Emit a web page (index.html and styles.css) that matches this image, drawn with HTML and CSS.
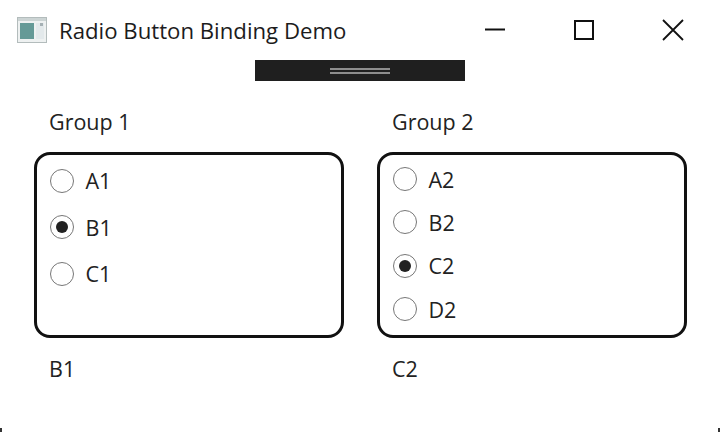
FILE: index.html
```html
<!DOCTYPE html>
<html lang="en">
<head>
<meta charset="utf-8">
<title>Radio Button Binding Demo</title>
<link rel="stylesheet" href="styles.css">
</head>
<body>
<div class="window">
  <header class="titlebar">
    <svg class="app-icon" width="30" height="26" viewBox="0 0 30 26" aria-hidden="true">
      <rect x="0.5" y="0.5" width="29" height="25" fill="#eef1f1" stroke="#b3bcbc"/>
      <rect x="1" y="1" width="28" height="3" fill="#ccd4d4"/>
      <rect x="3" y="6" width="14" height="16" fill="#659a97"/>
      <rect x="19" y="6" width="8" height="16" fill="#e3e9eb"/>
      <rect x="23" y="6" width="3" height="3" fill="#a5b0b4"/>
    </svg>
    <span class="title">Radio Button Binding Demo</span>
    <div class="controls">
      <svg class="ctl" width="22" height="22" viewBox="0 0 22 22" aria-hidden="true"><path d="M1 10.5H21" stroke="#111" stroke-width="2" fill="none"/></svg>
      <svg class="ctl" width="22" height="22" viewBox="0 0 22 22" aria-hidden="true"><rect x="2" y="2" width="18" height="18" stroke="#111" stroke-width="2" fill="none"/></svg>
      <svg class="ctl" width="22" height="22" viewBox="0 0 22 22" aria-hidden="true"><path d="M1 1L21 21M21 1L1 21" stroke="#111" stroke-width="1.8" fill="none"/></svg>
    </div>
  </header>
  <div class="debugbar"><div class="grip"></div></div>
  <main class="groups">
    <section class="group">
      <div class="label">Group 1</div>
      <div class="panel panel-wide">
        <div class="radio"><span class="dot"></span>A1</div>
        <div class="radio"><span class="dot on"></span>B1</div>
        <div class="radio"><span class="dot"></span>C1</div>
      </div>
      <div class="label value">B1</div>
    </section>
    <section class="group">
      <div class="label">Group 2</div>
      <div class="panel">
        <div class="radio"><span class="dot"></span>A2</div>
        <div class="radio"><span class="dot"></span>B2</div>
        <div class="radio"><span class="dot on"></span>C2</div>
        <div class="radio"><span class="dot"></span>D2</div>
      </div>
      <div class="label value">C2</div>
    </section>
  </main>
  <span class="tick tick-left"></span>
  <span class="tick tick-right"></span>
</div>
</body>
</html>
```
FILE: styles.css
```css
* { box-sizing: border-box; }
html, body { margin: 0; padding: 0; background: #fff; }
body { width: 720px; height: 432px; overflow: hidden; font-family: "Open Sans", "Noto Sans", sans-serif; color: #222; }
.window { position: relative; width: 720px; height: 432px; }
.titlebar { display: flex; align-items: center; height: 60px; padding-left: 17px; }
.app-icon { flex: none; margin-right: 12px; }
.title { font-size: 22.2px; color: #1c1c1c; white-space: nowrap; }
.controls { display: flex; gap: 67px; margin-left: auto; padding-right: 36px; }
.debugbar { display: flex; align-items: center; justify-content: center; width: 210px; height: 21px; margin: 0 auto; background: #1f1f1f; }
.grip { width: 60px; height: 6px; border-top: 2px solid #8d8d8d; border-bottom: 2px solid #8d8d8d; }
.groups { display: flex; gap: 33px; padding: 26px 0 0 34px; }
.group { width: 310px; }
.label { font-size: 21.5px; line-height: 30px; padding-left: 15px; height: 45px; }
.panel { height: 186px; border: 3.5px solid #111; border-radius: 16px; padding: 2.5px 0 0 12.5px; }
.radio { display: flex; align-items: center; height: 43.3px; font-size: 21.5px; }
.panel-wide .radio { height: 46.5px; }
.dot { flex: none; display: flex; align-items: center; justify-content: center; width: 24px; height: 24px; margin-right: 12px; border: 1.5px solid #777; border-radius: 50%; background: #fff; }
.dot.on::after { content: ""; width: 12px; height: 12px; border-radius: 50%; background: #222; }
.value { margin-top: 16px; }
.tick { position: absolute; bottom: 0; width: 2px; height: 4px; background: #333; }
.tick-left { left: 0; }
.tick-right { right: 0; }
```
